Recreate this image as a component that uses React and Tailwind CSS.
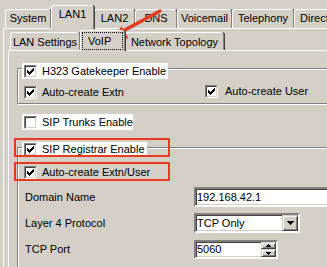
import React from "react";

// classic 13px checkbox with the 7x7 tick
function Check({ checked }) {
  return (
    <span className="inline-block w-[13px] h-[13px] shrink-0 border border-t-[#808080] border-l-[#808080] border-b-white border-r-white">
      <span className="flex items-center justify-center w-full h-full bg-white border border-t-[#404040] border-l-[#404040] border-b-[#d4d0c8] border-r-[#d4d0c8]">
        {checked && (
          <svg width="7" height="7" viewBox="0 0 7 7" shapeRendering="crispEdges">
            {[2, 3, 4, 3, 2, 1, 0].map((y, x) => (
              <rect key={x} x={x} y={y} width="1" height="3" fill="#000" />
            ))}
          </svg>
        )}
      </span>
    </span>
  );
}

const tab =
  "shrink-0 text-center whitespace-nowrap overflow-hidden bg-[#d4d0c8] border-t border-l border-r border-white border-r-[#808080] rounded-t-[3px] shadow-[1px_0_0_#404040]";

const sunken =
  "border-2 border-t-[#808080] border-l-[#808080] border-b-white border-r-white bg-white shadow-[inset_1px_1px_0_#404040,inset_-1px_-1px_0_#d4d0c8]";

const raised =
  "bg-[#d4d0c8] border border-t-[#d4d0c8] border-l-[#d4d0c8] border-b-[#404040] border-r-[#404040] shadow-[inset_1px_1px_0_#fff,inset_-1px_-1px_0_#808080]";

export default function App() {
  return (
    <div className="relative w-[327px] h-[267px] overflow-hidden bg-[#d4d0c8] text-[11px] leading-[13px] text-black font-['Liberation_Sans',Arial,sans-serif]">
      <div className="w-[420px]">
        {/* Main tabs */}
        <div className="flex items-end h-[28px] pl-[5px]">
          <div className={`${tab} w-[46px] h-[19px] pt-[2px]`}>System</div>
          <div className={`${tab} relative z-10 w-[43px] h-[24px] mb-[-1px] pt-[2px]`}>LAN1</div>
          <div className={`${tab} w-[41px] h-[19px] pt-[2px]`}>LAN2</div>
          <div className={`${tab} w-[42px] h-[19px] pt-[2px]`}>DNS</div>
          <div className={`${tab} w-[55px] h-[19px] pt-[2px]`}>Voicemail</div>
          <div className={`${tab} w-[62px] h-[19px] pt-[2px]`}>Telephony</div>
          <div className={`${tab} w-[70px] h-[19px] pt-[2px] text-left pl-[5px]`}>Directory</div>
        </div>

        <div className="ml-[3px] border-t border-l border-white">
          {/* Sub tabs */}
          <div className="flex items-end h-[21px] pl-[6px]">
            <div className={`${tab} w-[70px] h-[18px] pt-[3px]`}>LAN Settings</div>
            <div className={`${tab} relative z-10 w-[45px] h-[21px] mb-[-1px] p-[1px]`}>
              <div className="h-[18px] border border-dotted border-black flex items-center pl-[5px]">VoIP</div>
            </div>
            <div className={`${tab} w-[99px] h-[18px] pt-[3px]`}>Network Topology</div>
          </div>

          <div className="ml-[4px] border-t border-l border-white h-[260px]">
            {/* H323 group */}
            <div className="ml-[8px] mr-[10px] mt-[17px] border border-[#808080] shadow-[inset_1px_1px_0_#fff,1px_1px_0_#fff] pb-[3px]">
              <div className="-mt-[6px] ml-[4px] w-[146px] h-[16px] bg-white flex items-center pl-[2px] gap-[5px]">
                <Check checked />
                <span>H323 Gatekeeper Enable</span>
              </div>
              <div className="mt-[5px] h-[16px] flex items-center pl-[6px]">
                <div className="w-[181px] flex items-center gap-[5px]">
                  <Check checked />
                  <span>Auto-create Extn</span>
                </div>
                <div className="flex items-center gap-[7px] -mt-[1px]">
                  <Check checked />
                  <span>Auto-create User</span>
                </div>
              </div>
            </div>

            <div className="mt-[10px] ml-[13px] w-[111px] h-[16px] bg-white flex items-center pl-[2px] gap-[5px]">
              <Check />
              <span>SIP Trunks Enable</span>
            </div>

            {/* SIP group */}
            <div className="ml-[8px] mr-[10px] mt-[17px] border-t border-l border-[#808080] shadow-[inset_1px_1px_0_#fff] h-[200px]">
              <div className="-mt-[6px] ml-[4px] w-[125px] h-[15px] bg-white flex items-center pl-[2px] gap-[5px]">
                <Check checked />
                <span>SIP Registrar Enable</span>
              </div>
              <div className="mt-[7px] h-[16px] flex items-center pl-[6px] gap-[5px]">
                <Check checked />
                <span>Auto-create Extn/User</span>
              </div>

              <div className="mt-[7px] h-[20px] flex items-center pl-[7px]">
                <span className="w-[169px] shrink-0">Domain Name</span>
                <div className={`${sunken} w-[150px] h-[20px] flex items-center pl-[1px]`}>192.168.42.1</div>
              </div>

              <div className="mt-[6px] h-[20px] flex items-center pl-[7px]">
                <span className="w-[169px] shrink-0">Layer 4 Protocol</span>
                <div className={`${sunken} w-[106px] h-[20px] flex items-center justify-between pl-[1px]`}>
                  <span>TCP Only</span>
                  <span className={`${raised} w-[16px] h-[16px] flex items-center justify-center`}>
                    <svg width="7" height="4" viewBox="0 0 7 4" shapeRendering="crispEdges">
                      <polygon points="0,0 7,0 3.5,4" fill="#000" />
                    </svg>
                  </span>
                </div>
              </div>

              <div className="mt-[7px] h-[19px] flex items-center pl-[7px]">
                <span className="w-[169px] shrink-0">TCP Port</span>
                <div className={`${sunken} w-[84px] h-[19px] flex items-center justify-between pl-[1px]`}>
                  <span>5060</span>
                  <span className="flex flex-col w-[15px] h-[15px]">
                    <span className={`${raised} h-[7px] flex items-center justify-center`}>
                      <svg width="5" height="3" viewBox="0 0 5 3" shapeRendering="crispEdges">
                        <polygon points="2.5,0 5,3 0,3" fill="#000" />
                      </svg>
                    </span>
                    <span className={`${raised} h-[8px] flex items-center justify-center`}>
                      <svg width="5" height="3" viewBox="0 0 5 3" shapeRendering="crispEdges">
                        <polygon points="0,0 5,0 2.5,3" fill="#000" />
                      </svg>
                    </span>
                  </span>
                </div>
              </div>
            </div>
          </div>
        </div>
      </div>

      {/* Annotations */}
      <div className="absolute left-[14px] top-[138px] w-[156px] h-[19px] border-2 border-[#e63b1f]" />
      <div className="absolute left-[14px] top-[162px] w-[156px] h-[19px] border-2 border-[#e63b1f]" />
      <svg className="absolute left-0 top-0 pointer-events-none" width="327" height="60">
        <line x1="160" y1="11" x2="123" y2="31" stroke="#e63b1f" strokeWidth="3.5" strokeLinecap="round" />
        <polygon points="111,40 121.6,26.2 128.4,38.4" fill="#e63b1f" />
      </svg>
    </div>
  );
}
